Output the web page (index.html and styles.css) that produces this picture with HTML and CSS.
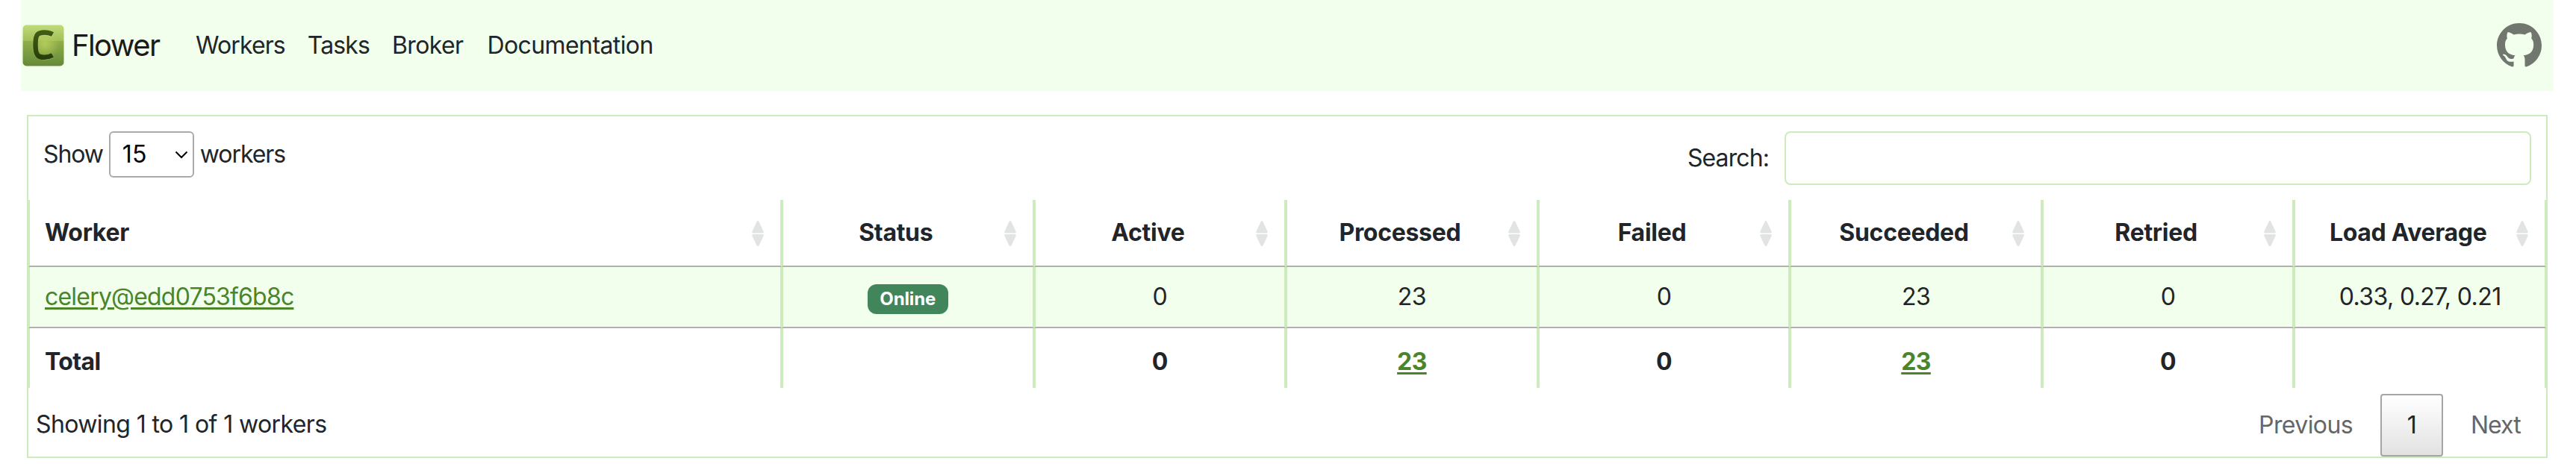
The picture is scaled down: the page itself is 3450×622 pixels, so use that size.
FILE: index.html
```
<!DOCTYPE html>
<html lang="en">
<head>
<meta charset="utf-8">
<title>Flower</title>
<link rel="stylesheet" href="styles.css">
</head>
<body>
<svg width="0" height="0" class="defs">
  <symbol id="sort" viewBox="0 0 16 34"><path d="M8 0C9 0 9.400 1.200 10 2.500L15.500 14Q16.400 16.400 14 16.400H2Q-.4 16.400 .5 14L6 2.500C6.600 1.200 7 0 8 0ZM8 34.500C9 34.500 9.400 33.300 10 32L15.500 20.500Q16.400 18 14 18H2Q-.4 18 .5 20.500L6 32C6.600 33.300 7 34.500 8 34.500Z" fill="#e1e4e3"/></symbol>
</svg>
<header class="navbar">
  <a class="brand">
    <svg class="logo" viewBox="0 0 56 56">
      <defs>
        <linearGradient id="tile" x1="0" y1="0" x2="0" y2="1"><stop offset="0" stop-color="#c0dc7a"/><stop offset=".38" stop-color="#a3bf58"/><stop offset=".4" stop-color="#8fae48"/><stop offset="1" stop-color="#65893a"/></linearGradient>
        <radialGradient id="glow"><stop offset="0" stop-color="#b6cf5c" stop-opacity=".9"/><stop offset="1" stop-color="#b6cf5c" stop-opacity="0"/></radialGradient>
        <linearGradient id="letter" x1="0" y1="0" x2="0" y2="1"><stop offset="0" stop-color="#3f5c14"/><stop offset="1" stop-color="#283f0c"/></linearGradient>
      </defs>
      <rect x=".5" y=".5" width="55" height="55" rx="5" fill="url(#tile)"/>
      <circle cx="30" cy="26" r="20" fill="url(#glow)"/>
      <path d="M41 14C34 10.500 24 10 20.500 14C16.500 18 16.500 37 20.500 41C24 45 34 45 41 41" fill="none" stroke="#c9e07e" stroke-opacity=".45" stroke-width="7"/>
      <path d="M40.500 13C34 9.500 24 9.500 20.500 13C16.500 17 16.500 36.500 20.500 41C24 45 34 44.500 40.500 41" fill="none" stroke="url(#letter)" stroke-width="6.500"/>
    </svg>
    <span>Flower</span>
  </a>
  <nav class="links">
    <a class="tight">Workers</a><a class="tight">Tasks</a><a>Broker</a><a class="docs">Documentation</a>
  </nav>
  <svg class="github" viewBox="0 0 16 16"><path fill="#71776e" d="M8 0C3.580 0 0 3.580 0 8c0 3.540 2.290 6.530 5.470 7.590.4.070.55-.17.55-.38 0-.19-.01-.82-.01-1.490-2.010.37-2.530-.49-2.690-.94-.09-.23-.48-.94-.82-1.130-.28-.15-.68-.52-.01-.53.63-.01 1.080.58 1.230.82.72 1.210 1.870.87 2.330.66.07-.52.28-.87.51-1.070-1.780-.2-3.640-.89-3.640-3.950 0-.87.31-1.590.82-2.150-.08-.2-.36-1.020.08-2.120 0 0 .67-.21 2.200.82.64-.18 1.320-.27 2-.27s1.360.09 2 .27c1.530-1.040 2.200-.82 2.200-.82.44 1.100.16 1.920.08 2.120.51.56.82 1.270.82 2.150 0 3.070-1.870 3.750-3.650 3.950.29.25.54.73.54 1.480 0 1.070-.01 1.930-.01 2.200 0 .21.15.46.55.38A8.010 8.010 0 0 0 16 8c0-4.420-3.580-8-8-8z"/></svg>
</header>
<main class="panel">
  <div class="toolbar">
    <div class="length"><span>Show</span>
      <span class="select">15<svg viewBox="0 0 18 11"><path d="M1.500 1.500L9 9L16.500 1.500" fill="none" stroke="#000" stroke-width="2"/></svg></span>
      <span>workers</span></div>
    <label class="search"><span>Search:</span><input type="text"></label>
  </div>
  <table>
    <colgroup><col class="first"><col><col><col><col><col><col><col></colgroup>
    <thead><tr>
      <th><div>Worker<svg><use href="#sort"/></svg></div></th>
      <th><div>Status<svg><use href="#sort"/></svg></div></th>
      <th><div>Active<svg><use href="#sort"/></svg></div></th>
      <th><div>Processed<svg><use href="#sort"/></svg></div></th>
      <th><div>Failed<svg><use href="#sort"/></svg></div></th>
      <th><div>Succeeded<svg><use href="#sort"/></svg></div></th>
      <th><div>Retried<svg><use href="#sort"/></svg></div></th>
      <th><div>Load Average<svg><use href="#sort"/></svg></div></th>
    </tr></thead>
    <tbody><tr>
      <td><a class="name">celery@edd0753f6b8c</a></td><td><span class="badge">Online</span></td><td>0</td><td>23</td><td>0</td><td>23</td><td>0</td><td>0.33, 0.27, 0.21</td>
    </tr></tbody>
    <tfoot><tr>
      <td>Total</td><td></td><td>0</td><td><a>23</a></td><td>0</td><td><a>23</a></td><td>0</td><td></td>
    </tr></tfoot>
  </table>
  <div class="footer">
    <div class="info">Showing 1 to 1 of 1 workers</div>
    <div class="pages"><span>Previous</span><span class="current">1</span><span class="next">Next</span></div>
  </div>
</main>
</body>
</html>
```
FILE: styles.css
```
* { box-sizing: border-box; }
body {
  margin: 0;
  padding: 0 30px 0 28px;
  background: #fff;
  color: #212529;
  font: 32px/48px Inter, "Liberation Sans", sans-serif;
  letter-spacing: -0.6px;
}
.defs { display: block; }
.navbar {
  display: flex;
  align-items: center;
  height: 122px;
  padding: 0 16px 0 2px;
  background: #f2ffec;
}
.brand { display: flex; align-items: center; width: 232px; gap: 10px; font-size: 40px; color: #1a1a1a; letter-spacing: -1.6px; }
.logo { width: 56px; height: 56px; }
.links { display: flex; gap: 30px; flex: 1; }
.tight { letter-spacing: -0.9px; }
.docs { margin-left: 2px; }
.github { width: 60px; height: 60px; }
.panel { margin: 32px 8px 0; height: 460px; border: 2px solid #cdebbd; }
.toolbar { display: flex; justify-content: space-between; align-items: flex-start; height: 112px; padding: 20px 20px 0; }
.length { display: flex; align-items: center; height: 62px; letter-spacing: -1.1px; }
.select {
  display: flex; align-items: center; justify-content: space-between;
  width: 114px; height: 62px; margin: 0 8px; padding: 0 6px 0 16px;
  border: 2px solid #aaa; border-radius: 6px; color: #000; letter-spacing: 0;
}
.select svg { width: 18px; height: 11px; }
.search { display: flex; align-items: center; gap: 21px; letter-spacing: -0.9px; }
.search input { width: 1000px; height: 72px; border: 2px solid #cdebbd; border-radius: 8px; background: transparent; }
table { width: 3372px; table-layout: fixed; border-collapse: separate; border-spacing: 0; }
.first { width: 1009px; }
th, td { border: 0 solid #cdebbd; border-width: 0 2px; padding: 0 20px; text-align: center; }
th:first-child, td:first-child { text-align: left; }
th { height: 90px; border-bottom: 2px solid #b0b0b0; padding-right: 52px; font-weight: 700; letter-spacing: -0.3px; }
th div { position: relative; }
th svg { position: absolute; right: -30px; top: 8px; width: 16px; height: 34px; }
tbody td { height: 82px; background: #f2ffec; border-bottom: 2px solid #b0b0b0; }
tfoot td { height: 80px; padding-top: 9px; font-weight: 700; }
td a { color: #4b8529; text-decoration: underline; text-decoration-thickness: 3px; text-underline-offset: 3px; }
.name { letter-spacing: -0.8px; }
.badge {
  display: inline-block; width: 108px; height: 40px; border-radius: 12px; margin-top: 2px;
  background: #41865a; color: #fff; font-size: 24px; line-height: 40px; font-weight: 700; letter-spacing: -0.1px; vertical-align: middle;
}
.footer { display: flex; justify-content: space-between; }
.info { padding: 25px 0 0 10px; }
.pages { display: flex; height: 84px; margin-top: 8px; padding-right: 35px; line-height: 84px; color: #666; }
.current {
  width: 84px; margin: 0 37px; line-height: 80px; text-align: center; color: #212529;
  border: 2px solid #a5a5a5; border-radius: 4px; background: linear-gradient(#fff, #e2e2e2);
}
.next { width: 66px; letter-spacing: -1px; }
```
